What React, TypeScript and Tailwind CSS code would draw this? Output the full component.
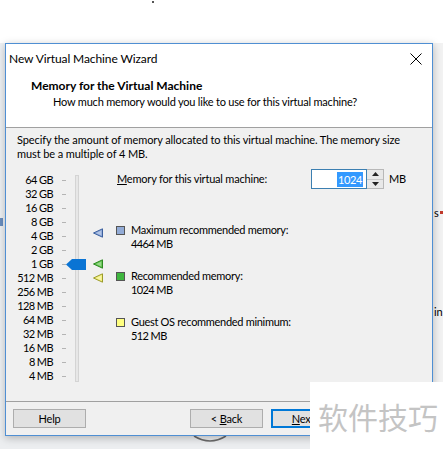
import React from "react";

const sizes = [
  "64 GB",
  "32 GB",
  "16 GB",
  "8 GB",
  "4 GB",
  "2 GB",
  "1 GB",
  "512 MB",
  "256 MB",
  "128 MB",
  "64 MB",
  "32 MB",
  "16 MB",
  "8 MB",
  "4 MB",
];

function Marker({ fill, stroke }: { fill: string; stroke: string }) {
  return (
    <svg width="10" height="10" viewBox="0 0 10 10">
      <polygon points="0.5,5 9.5,0.8 9.5,9.2" fill={fill} stroke={stroke} strokeWidth="1" />
      <polygon points="3,5 8.3,2.6 8.3,7.4" fill="#ffffff" opacity="0.35" />
    </svg>
  );
}

function Swatch({ color }: { color: string }) {
  return <div className="w-[9px] h-[9px] border border-[#555] shrink-0 mt-[3px]" style={{ background: color }} />;
}

function Btn({ children, def }: { children: React.ReactNode; def?: boolean }) {
  return (
    <div
      className={
        "w-[73px] h-[19px] flex items-center justify-center bg-[#e1e1e1] text-black " +
        (def ? "border-2 border-[#0078d7]" : "border border-[#adadad]")
      }
    >
      <span className="whitespace-pre">{children}</span>
    </div>
  );
}

export default function App() {
  return (
    <div className="relative w-[443px] h-[449px] overflow-hidden bg-white font-['Lato',sans-serif] text-[11px] tracking-[-0.2px] text-black leading-[14px]">
      {/* desktop background fragments */}
      <div className="absolute left-[152px] top-[1px] w-[2px] h-[2px] bg-[#555]" />
      <div className="absolute left-0 top-[43px] w-[6px] h-[406px] bg-[#eef1f4]" />
      <div className="absolute left-0 top-[218px] w-[3px] h-[8px] bg-[#6a8fc0]" />
      <div className="absolute left-[432px] top-[43px] w-[11px] h-[406px] bg-[#f2f2f2]" />
      <div className="absolute left-[434px] top-[206px] text-black">s</div>
      <div className="absolute left-[440px] top-[211px] w-[3px] h-[3px] bg-[#c0392b]" />
      <div className="absolute left-[434px] top-[305px] text-black">in</div>
      <div className="absolute left-0 top-[435px] w-[443px] h-[14px] bg-[#eceef0]" />
      <svg className="absolute left-[190px] top-[434px]" width="40" height="12" viewBox="0 0 40 12">
        <path d="M4 2 Q20 12 36 2" fill="none" stroke="#6b6b6b" strokeWidth="1.5" />
      </svg>

      {/* dialog window */}
      <div className="absolute left-[5px] top-[43px] w-[428px] h-[393px] border border-[#4f8fd3] bg-[#f0f0f0] flex flex-col shadow-[0_2px_8px_rgba(0,0,0,0.25)]">
        {/* title + header */}
        <div className="bg-white h-[83px] flex flex-col shrink-0">
          <div className="h-[29px] flex items-center justify-between pl-[3px] pr-[10px]">
            <span className="text-[12px] tracking-[-0.1px] leading-[14px]">New Virtual Machine Wizard</span>
            <svg width="12" height="12" viewBox="0 0 12 12">
              <path d="M0.5 0.5 L11.5 11.5 M11.5 0.5 L0.5 11.5" stroke="#000" strokeWidth="1" />
            </svg>
          </div>
          <div className="pl-[25px] pt-[6px] font-bold text-[12px] tracking-[0px]">Memory for the Virtual Machine</div>
          <div className="pl-[47px] pt-[2px]">How much memory would you like to use for this virtual machine?</div>
        </div>
        <div className="h-px bg-[#a0a0a0] shrink-0" />

        {/* body */}
        <div className="flex-1 flex flex-col pt-[5px]">
          <div className="pl-[11px] whitespace-nowrap tracking-[-0.1px]">
            Specify the amount of memory allocated to this virtual machine. The memory size
            <br />
            must be a multiple of 4 MB.
          </div>

          <div className="flex mt-[9px]">
            {/* slider */}
            <div className="relative flex pt-[3px] w-[110px] shrink-0">
              <div className="flex flex-col w-[47px] items-end">
                {sizes.map((s) => (
                  <div key={s} className="h-[14px] leading-[14px] whitespace-nowrap tracking-[-0.6px]">
                    {s}
                  </div>
                ))}
              </div>
              <div className="flex flex-col ml-[9px]">
                {sizes.map((s) => (
                  <div key={s} className="h-[14px] flex items-center">
                    <div className="w-[4px] h-px bg-[#b4b4b4]" />
                  </div>
                ))}
              </div>
              <div className="ml-[9px] mt-[2px] w-[4px] h-[207px] bg-[#e7e7e7] border border-[#d4d4d4]" />
              {/* thumb */}
              <svg className="absolute left-[60px] top-[89px]" width="20" height="11" viewBox="0 0 20 11">
                <polygon points="0,5.5 6,0 20,0 20,11 6,11" fill="#0a74d4" />
              </svg>
              {/* markers */}
              <div className="absolute left-[87px] top-[58px]">
                <Marker fill="#8aa6d8" stroke="#3b5f9e" />
              </div>
              <div className="absolute left-[87px] top-[89px]">
                <Marker fill="#5ec24a" stroke="#2e8a23" />
              </div>
              <div className="absolute left-[87px] top-[103px]">
                <Marker fill="#f3f07a" stroke="#9a9a2a" />
              </div>
            </div>

            {/* right panel */}
            <div className="flex flex-col">
              <div className="flex items-center h-[20px] -mt-px">
                <div className="w-[195px] pl-px">
                  <span className="underline">M</span>emory for this virtual machine:
                </div>
                <div className="w-[56px] h-[20px] border border-[#3c7fb1] bg-white flex items-center justify-end pr-[3px]">
                  <span className="bg-[#3399ff] text-white px-px leading-[15px] tracking-[-0.4px]">1024</span>
                </div>
                <div className="w-[17px] h-[20px] flex flex-col border border-[#b8b8b8] border-l-0 bg-[#f0f0f0]">
                  <div className="flex-1 flex items-center justify-center border-b border-[#c8c8c8] bg-[#e8e8e8]">
                    <svg width="7" height="4" viewBox="0 0 7 4">
                      <polygon points="3.5,0 7,4 0,4" fill="#222" />
                    </svg>
                  </div>
                  <div className="flex-1 flex items-center justify-center bg-[#e8e8e8]">
                    <svg width="7" height="4" viewBox="0 0 7 4">
                      <polygon points="0,0 7,0 3.5,4" fill="#222" />
                    </svg>
                  </div>
                </div>
                <div className="ml-[5px]">MB</div>
              </div>

              <div className="flex flex-col gap-[18px] mt-[34px] tracking-[-0.3px]">
                <div className="flex gap-[6px]">
                  <Swatch color="#92abd6" />
                  <div className="flex flex-col">
                    <span>Maximum recommended memory:</span>
                    <span className="tracking-[-0.6px]">4464 MB</span>
                  </div>
                </div>
                <div className="flex gap-[6px]">
                  <Swatch color="#3fb63f" />
                  <div className="flex flex-col">
                    <span>Recommended memory:</span>
                    <span className="tracking-[-0.6px]">1024 MB</span>
                  </div>
                </div>
                <div className="flex gap-[6px]">
                  <Swatch color="#ffff80" />
                  <div className="flex flex-col">
                    <span>Guest OS recommended minimum:</span>
                    <span className="tracking-[-0.6px]">512 MB</span>
                  </div>
                </div>
              </div>
            </div>
          </div>
        </div>

        <div className="h-px bg-[#a0a0a0] shrink-0" />
        {/* footer */}
        <div className="h-[33px] shrink-0 flex items-start pt-[7px] pl-[7px]">
          <Btn>Help</Btn>
          <div className="ml-[104px]">
            <Btn>
              {"< "}
              <span className="underline">B</span>ack
            </Btn>
          </div>
          <div className="ml-[8px]">
            <Btn def>
              <span className="underline">N</span>
              {"ext >"}
            </Btn>
          </div>
        </div>
      </div>

      {/* watermark */}
      <div className="absolute left-[310px] top-[382px] w-[133px] h-[67px] bg-white flex items-center pl-[8px]">
        <span className="whitespace-nowrap text-[30px] leading-[32px] tracking-[0px] text-[#c4c4c4] font-['Noto_Sans_CJK_SC',sans-serif]">
          软件技巧
        </span>
      </div>
    </div>
  );
}
